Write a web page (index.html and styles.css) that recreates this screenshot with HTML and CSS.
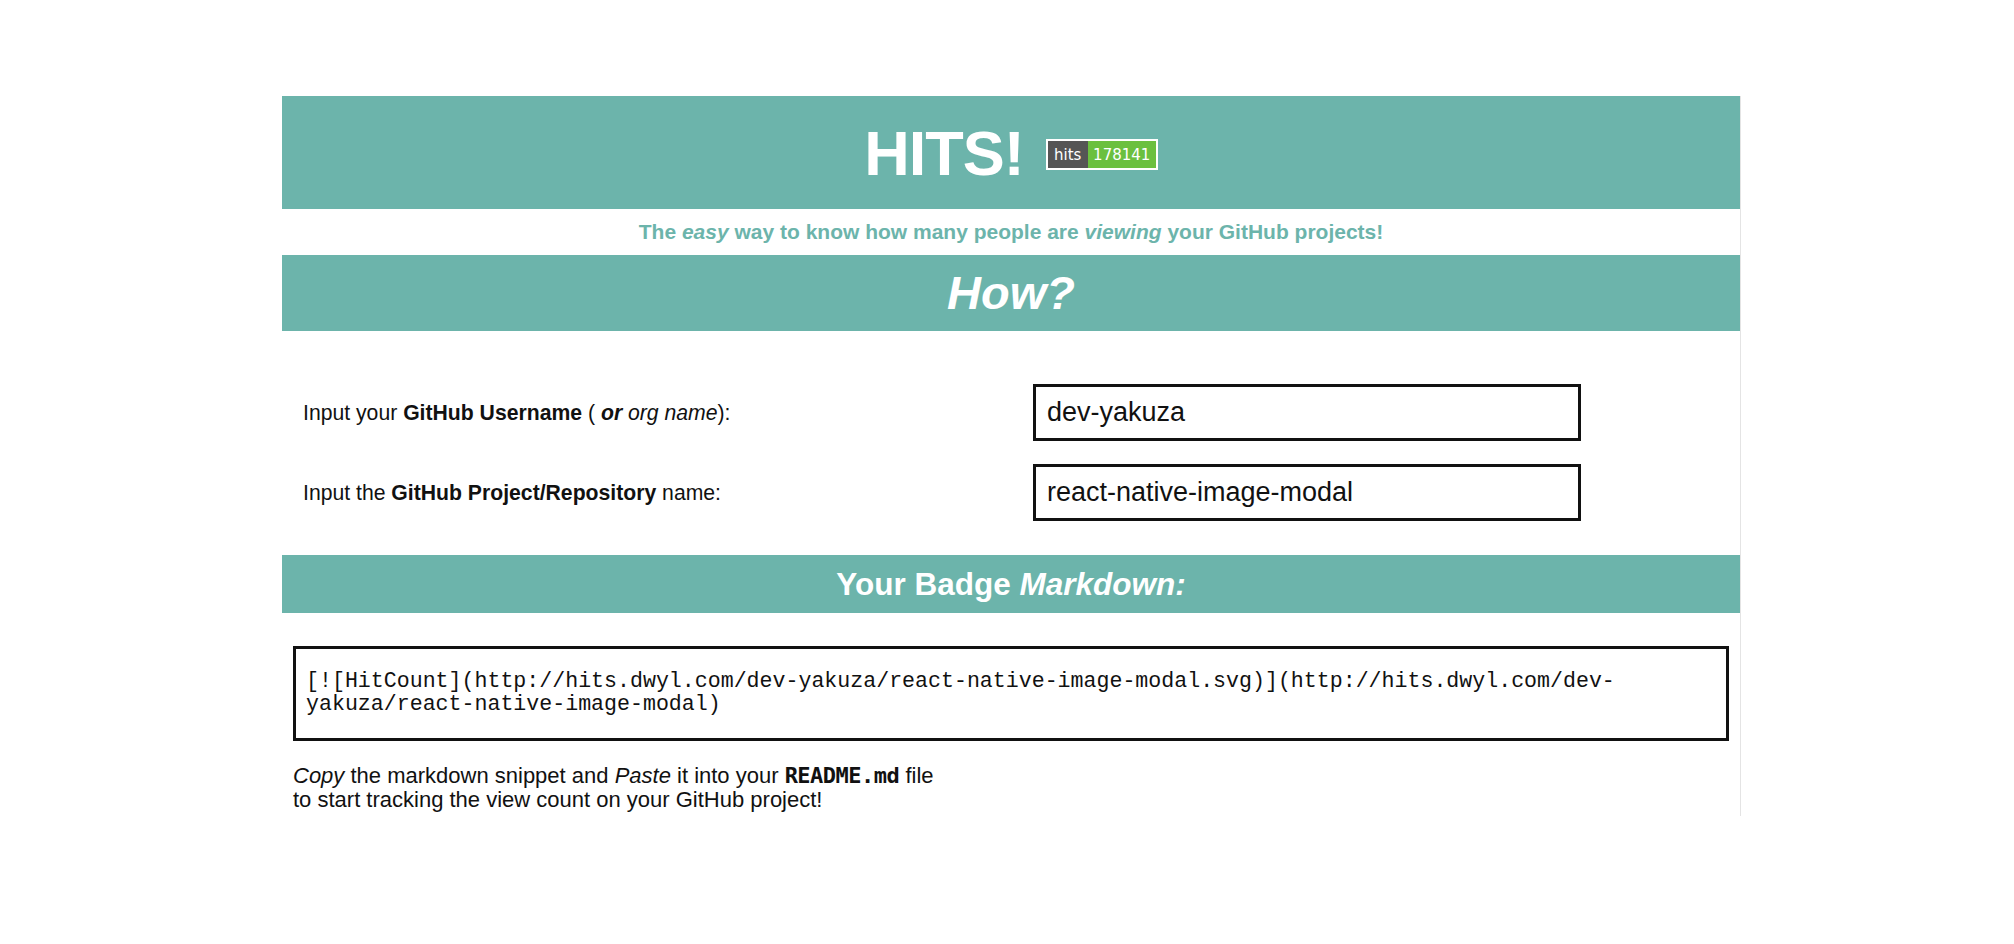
FILE: index.html
```html
<!DOCTYPE html>
<html lang="en">
<head>
<meta charset="utf-8">
<title>Hits</title>
<link rel="stylesheet" href="styles.css">
</head>
<body>
<div class="container">
  <header class="header">
    <h1 class="title">HITS!</h1>
    <span class="badge"><span class="badge-label">hits</span><span class="badge-count">178141</span></span>
  </header>
  <p class="tagline">The <em>easy</em> way to know how many people are <em>viewing</em> your GitHub projects!</p>
  <h2 class="band band-how"><em>How?</em></h2>
  <div class="form">
    <label class="label">Input your <strong>GitHub Username</strong> ( <strong><em>or</em></strong> <em>org name</em>):</label>
    <div class="input">dev-yakuza</div>
    <label class="label">Input the <strong>GitHub Project/Repository</strong> name:</label>
    <div class="input">react-native-image-modal</div>
  </div>
  <h3 class="band band-md">Your Badge <em>Markdown:</em></h3>
  <div class="code">[![HitCount](http://hits.dwyl.com/dev-yakuza/react-native-image-modal.svg)](http://hits.dwyl.com/dev-yakuza/react-native-image-modal)</div>
  <p class="note"><em>Copy</em> the markdown snippet and <em>Paste</em> it into your <code>README.md</code> file<br>to start tracking the view count on your GitHub project!</p>
</div>
</body>
</html>
```

FILE: styles.css
```css
html, body {
  margin: 0;
  padding: 0;
  background: #ffffff;
}
body {
  font-family: "Liberation Sans", Arial, Helvetica, sans-serif;
  color: #111;
}
.container {
  width: 1458px;
  margin: 96px 0 0 282px;
  border-right: 1px solid #e4e4e4;
  padding-bottom: 4px;
}
.header {
  background: #6cb4ab;
  height: 113px;
  display: flex;
  align-items: center;
  justify-content: center;
  gap: 22px;
}
.title {
  margin: 0;
  color: #fff;
  font-size: 63px;
  font-weight: bold;
  letter-spacing: -1px;
  line-height: 1;
  position: relative;
  top: 1px;
}
.badge {
  display: flex;
  border: 2px solid #fff;
  height: 27px;
  font-family: "DejaVu Sans", Verdana, sans-serif;
  font-size: 15px;
  color: #fff;
  position: relative;
  top: 2px;
}
.badge-label {
  background: #555;
  width: 40px;
  display: flex;
  align-items: center;
  justify-content: center;
}
.badge-count {
  background: #6bc03f;
  width: 68px;
  display: flex;
  align-items: center;
  justify-content: center;
}
.tagline {
  margin: 0;
  height: 46px;
  line-height: 46px;
  text-align: center;
  color: #6cb4ab;
  font-size: 21px;
  font-weight: bold;
}
.band {
  margin: 0;
  background: #6cb4ab;
  color: #fff;
  text-align: center;
  font-weight: bold;
}
.band-how {
  height: 76px;
  line-height: 76px;
  font-size: 47px;
}
.form {
  display: grid;
  grid-template-columns: 730px 548px;
  row-gap: 23px;
  align-items: center;
  padding: 53px 21px 0 21px;
}
.label {
  font-size: 21.2px;
}
.input {
  height: 51px;
  border: 3px solid #111;
  padding-left: 11px;
  font-size: 27px;
  display: flex;
  align-items: center;
}
.band-md {
  margin-top: 34px;
  height: 58px;
  line-height: 58px;
  font-size: 31.5px;
}
.code {
  margin: 33px 11px 0 11px;
  border: 3px solid #111;
  padding: 21px 10px 22px 10px;
  font-family: "Liberation Mono", "Courier New", monospace;
  font-size: 21.6px;
  line-height: 23px;
  color: #111;
}
.note {
  margin: 23px 11px 0 11px;
  font-size: 22px;
  line-height: 24px;
}
.note code {
  font-family: "DejaVu Sans Mono", monospace;
  font-weight: bold;
  font-size: 22px;
  letter-spacing: -0.5px;
}
```
